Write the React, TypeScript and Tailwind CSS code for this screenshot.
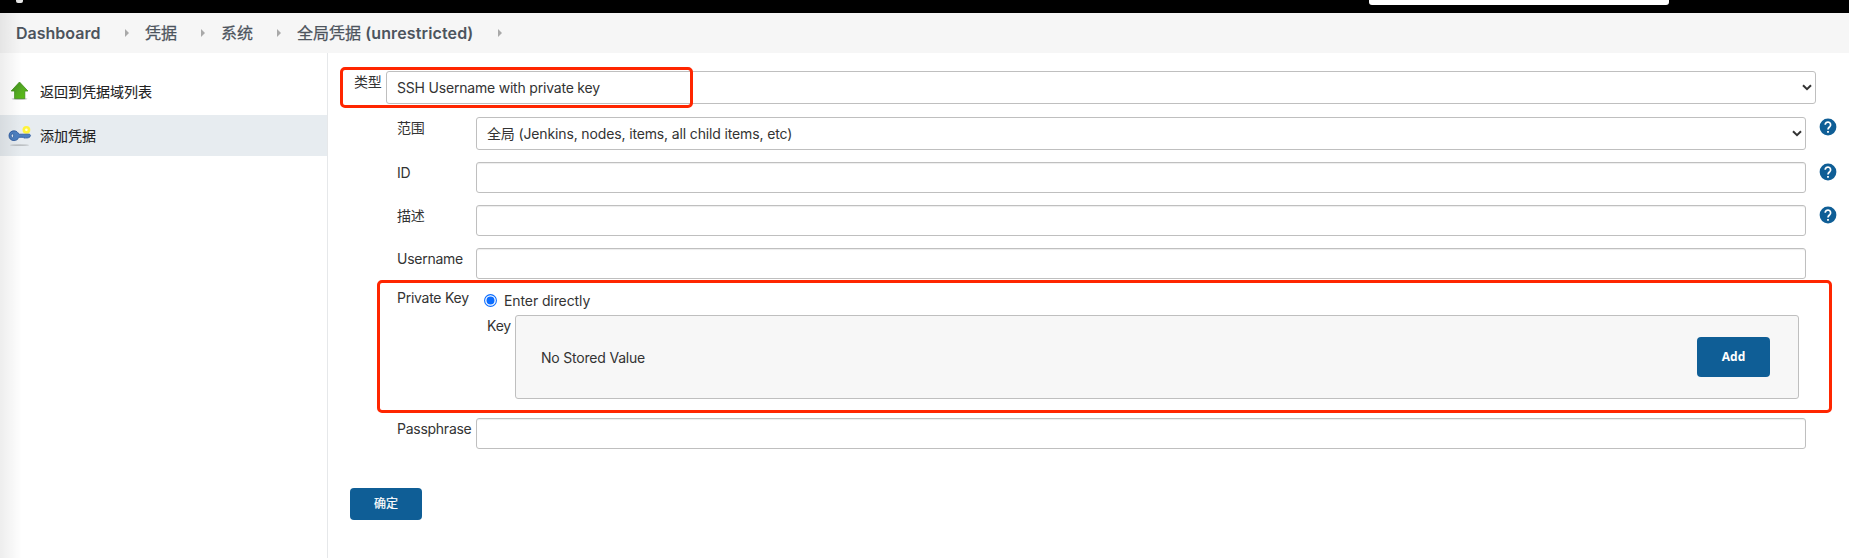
import React from "react";

const crumbs = [
  { label: "Dashboard", latin: "", width: "w-[109px]", heavy: true },
  { label: "凭据", latin: "", width: "w-[56px]", heavy: false },
  { label: "系统", latin: "", width: "w-[56px]", heavy: false },
  { label: "全局凭据", latin: " (unrestricted)", width: "w-[201px]", heavy: false },
];

function Chevron() {
  return (
    <svg className="h-[7px] w-[10px] shrink-0" viewBox="0 0 10 7" fill="none" stroke="#333333" strokeWidth="2">
      <path d="M1 1.2 5 5.2 9 1.2" />
    </svg>
  );
}

function Help() {
  return (
    <svg className="mt-[1px] ml-[13px] h-[18px] w-[18px] shrink-0" viewBox="0 0 18 18">
      <circle cx="9" cy="9" r="8.4" fill="#0f5e96" />
      <path d="M6.2 6.8A2.7 2.7 0 1 1 10.8 8.7C9.6 9.7 9 10 9 11.6" fill="none" stroke="#fff" strokeWidth="1.7" />
      <path d="M8.1 12.9h1.8v1.8H8.1z" fill="#fff" />
    </svg>
  );
}

function Row({
  label,
  gap,
  select,
  help,
}: {
  label: string;
  gap: string;
  select?: string;
  help?: boolean;
}) {
  return (
    <div className={`flex items-start pl-[69px] ${gap}`}>
      <label className="w-[79px] shrink-0 leading-[22px] tracking-[-0.26px] whitespace-nowrap">{label}</label>
      {select ? (
        <div className="flex h-[33px] w-[1330px] items-center justify-between rounded-[3px] border border-[#bfbfbf] bg-white pr-[3px] pl-[10px]">
          <span className="tracking-[-0.14px]">{select}</span>
          <Chevron />
        </div>
      ) : (
        <input
          className="h-[31px] w-[1330px] rounded-[3px] border border-[#bfbfbf] bg-white px-2 shadow-[inset_0_1px_1px_rgba(0,0,0,0.075)]"
          aria-label={label}
        />
      )}
      {help && <Help />}
    </div>
  );
}

function UpArrow() {
  return (
    <svg className="h-6 w-6 shrink-0" viewBox="0 0 24 24">
      <defs>
        <linearGradient id="leaf" x1="0" y1="0" x2="1" y2="1">
          <stop offset="0" stopColor="#3c8a16" />
          <stop offset="0.5" stopColor="#55aa24" />
          <stop offset="1" stopColor="#58c40b" />
        </linearGradient>
      </defs>
      <ellipse cx="11.5" cy="18.8" rx="8" ry="1.3" fill="#000" opacity="0.2" />
      <path d="M11.5 2 19.9 11H16.8V18.6H6.6V11H3.2Z" fill="url(#leaf)" stroke="#3f8f18" strokeWidth="0.8" />
    </svg>
  );
}

function KeyIcon() {
  return (
    <svg className="h-6 w-6 shrink-0" viewBox="0 0 24 24">
      <ellipse cx="11.5" cy="21.2" rx="9.5" ry="0.9" fill="#000" opacity="0.18" />
      <circle cx="18.4" cy="5.8" r="3.9" fill="#fff33a" />
      <circle cx="18.4" cy="5.8" r="1.3" fill="#fffde0" />
      <path
        d="M6 6.8c2.3 0 4 1.3 4.8 3.4h10.8l.9 1.2-.9 1.9h-1.1l-.7 1-.9-.9-.9 1-1-1-1 .9-.9-1h-4.3c-.8 2.1-2.5 3.3-4.8 3.3-2.9 0-5-2-5-4.9s2.1-4.9 5-4.9Z"
        fill="#4c7fc0"
        stroke="#28569a"
        strokeWidth="0.8"
      />
      <ellipse cx="4.4" cy="11.8" rx="1.2" ry="1.9" fill="#dfeaf6" stroke="#28569a" strokeWidth="0.7" />
    </svg>
  );
}

export default function App() {
  return (
    <div className="relative flex h-[558px] w-[1849px] flex-col overflow-hidden bg-white font-['Inter','Noto_Sans_CJK_SC',sans-serif] text-[14px] tracking-[-0.2px] text-[#333333]">
      <header className="flex h-[13px] shrink-0 items-start bg-black">
        <div className="ml-4 h-[3px] w-[7px] rounded-b-[2px] bg-[#e8e8e8]" />
        <div className="ml-[1346px] h-[5px] w-[300px] rounded-b-[3px] bg-white" />
      </header>

      <nav className="flex h-10 shrink-0 items-center bg-[#f6f6f6] pl-4 text-[16px] tracking-normal text-[#4d545d]">
        {crumbs.map((c) => (
          <div key={c.label} className="flex items-center">
            <span className={`${c.width} whitespace-pre`}>
              <span className={c.heavy ? "font-semibold" : "font-normal [-webkit-text-stroke:0.25px]"}>{c.label}</span>
              <span className="font-semibold tracking-[0.13px]">{c.latin}</span>
            </span>
            <svg className="mr-4 h-2 w-1" viewBox="0 0 4 8">
              <path d="M0 0 4 4 0 8Z" fill="#a9a9a9" />
            </svg>
          </div>
        ))}
      </nav>

      <div className="flex min-h-0 flex-1">
        <aside className="w-[328px] shrink-0 border-r border-[#e6e8ea] pt-[18px] tracking-normal text-[#222222] [-webkit-text-stroke:0.1px]">
          <a className="flex h-[41px] items-center gap-2 pl-2">
            <UpArrow />
            <span>返回到凭据域列表</span>
          </a>
          <a className="mt-[3px] flex h-[41px] items-center gap-2 bg-[#e7ecf0] pl-2">
            <KeyIcon />
            <span>添加凭据</span>
          </a>
        </aside>

        <main className="flex-1 pt-[18px]">
          <div className="flex items-start pl-[26px]">
            <label className="w-8 shrink-0 leading-[22px]">类型</label>
            <div className="flex h-[33px] w-[1430px] items-center justify-between rounded-[3px] border border-[#bfbfbf] bg-white pr-[3px] pl-[10px]">
              <span>SSH Username with private key</span>
              <Chevron />
            </div>
          </div>

          <Row label="范围" gap="mt-[13px]" select="全局 (Jenkins, nodes, items, all child items, etc)" help />
          <Row label="ID" gap="mt-3" help />
          <Row label="描述" gap="mt-3" help />
          <Row label="Username" gap="mt-3" />

          <div className="mt-[8px] flex items-start pl-[69px]">
            <div className="w-[87px] shrink-0 leading-[22px] tracking-[-0.26px] whitespace-nowrap">Private Key</div>
            <div>
              <label className="flex h-[28px] items-center">
                <svg className="mb-[2px] h-[13px] w-[13px]" viewBox="0 0 13 13">
                  <circle cx="6.5" cy="6.5" r="5.9" fill="#fff" stroke="#0a6cff" strokeWidth="1.1" />
                  <circle cx="6.5" cy="6.5" r="4" fill="#0a6cff" />
                </svg>
                <span className="mb-px ml-[7px] tracking-[-0.1px]">Enter directly</span>
              </label>
              <div className="flex items-start pl-[3px]">
                <span className="w-7 shrink-0 leading-[22px]">Key</span>
                <div className="flex h-[84px] w-[1284px] items-center justify-between rounded-[3px] border border-[#bfbfbf] bg-[#f7f7f7] pr-[28px] pl-[25px]">
                  <span>No Stored Value</span>
                  <button className="h-10 w-[73px] rounded-[4px] bg-[#0f5e96] font-['Open_Sans',sans-serif] text-[12px] font-bold tracking-normal text-white">
                    Add
                  </button>
                </div>
              </div>
            </div>
          </div>

          <Row label="Passphrase" gap="mt-[19px]" />

          <button className="mt-[39px] ml-[22px] h-8 w-[72px] rounded-[4px] bg-[#0f5e96] text-[12px] tracking-normal text-white [-webkit-text-stroke:0.2px]">
            确定
          </button>
        </main>
      </div>

      <div className="pointer-events-none absolute top-0 left-0 h-full w-[22px] bg-linear-to-r from-black/7 to-transparent" />
      <div className="pointer-events-none absolute top-[67px] left-[340px] h-[41px] w-[353px] rounded-[5px] border-3 border-[#ff2600]" />
      <div className="pointer-events-none absolute top-[280px] left-[377px] h-[133px] w-[1455px] rounded-[5px] border-3 border-[#ff2600]" />
    </div>
  );
}
